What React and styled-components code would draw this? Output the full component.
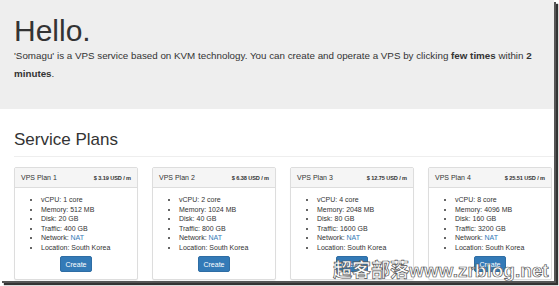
import React from "react";
import styled, { createGlobalStyle } from "styled-components";

const GlobalStyle = createGlobalStyle`
  html, body {
    margin: 0;
    padding: 0;
    background: #fff;
  }
  body {
    font-family: "Liberation Sans", Arial, sans-serif;
    color: #333;
  }
`;

const plans = [
  { name: "VPS Plan 1", price: "3.19", cpu: 1, mem: 512, disk: 20, traffic: 400 },
  { name: "VPS Plan 2", price: "6.38", cpu: 2, mem: 1024, disk: 40, traffic: 800 },
  { name: "VPS Plan 3", price: "12.75", cpu: 4, mem: 2048, disk: 80, traffic: 1600 },
  { name: "VPS Plan 4", price: "25.51", cpu: 8, mem: 4096, disk: 160, traffic: 3200 },
];

function App() {
  return (
    <Frame>
      <GlobalStyle />
      <Page>
        <Jumbotron>
          <Hello>Hello.</Hello>
          <Lead>
            'Somagu' is a VPS service based on KVM technology. You can create and
            operate a VPS by clicking <b>few times</b> within <b>2 minutes</b>.
          </Lead>
        </Jumbotron>
        <Container>
          <SectionTitle>Service Plans</SectionTitle>
          <Rule />
          <Cards>
            {plans.map((p) => (
              <Card key={p.name}>
                <CardHead>
                  <span>{p.name}</span>
                  <Price>$ {p.price} USD / m</Price>
                </CardHead>
                <CardBody>
                  <Specs>
                    <li>vCPU: {p.cpu} core</li>
                    <li>Memory: {p.mem} MB</li>
                    <li>Disk: {p.disk} GB</li>
                    <li>Traffic: {p.traffic} GB</li>
                    <li>
                      Network: <Link>NAT</Link>
                    </li>
                    <li>Location: South Korea</li>
                  </Specs>
                  <CreateButton>Create</CreateButton>
                </CardBody>
              </Card>
            ))}
          </Cards>
        </Container>
        <Watermark>超客部落www.zrblog.net</Watermark>
      </Page>
    </Frame>
  );
}

export default App;

const Frame = styled.div`
  width: 559px;
  height: 286px;
  overflow: hidden;
`;

const Page = styled.div`
  position: relative;
  width: 554px;
  height: 281px;
  overflow: hidden;
  background: #fff;
  box-shadow: 2px 2px 0 #555, 4px 4px 1px #333;
`;

const Jumbotron = styled.div`
  background: #eee;
  padding: 14px 8px 27px 14px;
`;

const Hello = styled.h1`
  margin: 0;
  font-size: 30px;
  line-height: 33px;
  font-weight: 400;
  color: #333;
`;

const Lead = styled.p`
  margin: 0;
  font-size: 9.8px;
  line-height: 17.5px;
  color: #333;

  b {
    font-weight: 700;
  }
`;

const Container = styled.div`
  padding: 0 0 0 14px;
`;

const SectionTitle = styled.h2`
  margin: 21px 0 0;
  font-size: 17px;
  line-height: 20px;
  font-weight: 400;
  color: #333;
`;

const Rule = styled.div`
  height: 1px;
  background: #eee;
  margin: 6px 0 10px;
`;

const Cards = styled.div`
  display: grid;
  grid-template-columns: repeat(4, 124px);
  gap: 14px;
`;

const Card = styled.div`
  border: 1px solid #ddd;
  border-radius: 2px;
  background: #fff;
  box-shadow: 0 1px 1px rgba(0, 0, 0, 0.05);
`;

const CardHead = styled.div`
  display: flex;
  justify-content: space-between;
  align-items: center;
  height: 19px;
  padding: 0 6px 0 6px;
  background: #f5f5f5;
  border-bottom: 1px solid #ddd;
  font-size: 7px;
  color: #333;
`;

const Price = styled.span`
  font-size: 5.6px;
  font-weight: 700;
  letter-spacing: -0.1px;
`;

const CardBody = styled.div`
  display: flex;
  flex-direction: column;
  align-items: center;
  padding: 7px 0 7px;
`;

const Specs = styled.ul`
  align-self: stretch;
  margin: 0 0 4px;
  padding: 0 0 0 26px;
  list-style: disc;
  font-size: 7px;
  line-height: 9.5px;
  color: #333;
`;

const Link = styled.span`
  color: #337ab7;
`;

const CreateButton = styled.button`
  width: 32px;
  height: 16px;
  padding: 0;
  border: 1px solid #2e6da4;
  border-radius: 2px;
  background: #337ab7;
  color: #fff;
  font-family: "Liberation Sans", Arial, sans-serif;
  font-size: 7px;
`;

const Watermark = styled.div`
  position: absolute;
  left: 333px;
  top: 260px;
  font-family: "Liberation Sans", "Noto Sans CJK SC", sans-serif;
  font-size: 19px;
  font-weight: 700;
  line-height: 21px;
  color: #fff;
  -webkit-text-stroke: 0.7px #555;
  white-space: nowrap;
`;
